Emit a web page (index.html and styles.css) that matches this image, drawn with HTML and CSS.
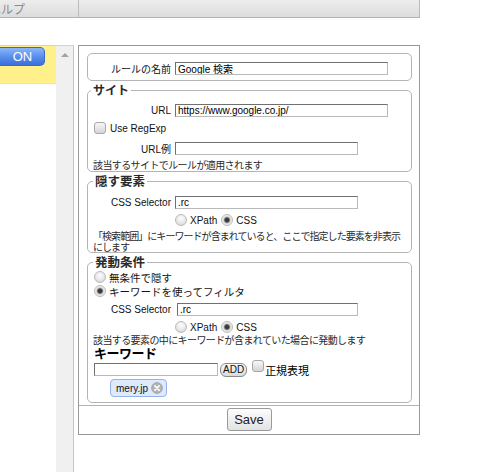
FILE: index.html
```html
<!DOCTYPE html>
<html lang="ja">
<head>
<meta charset="utf-8">
<title>Rules</title>
<link rel="stylesheet" href="styles.css">
</head>
<body>
<div class="app">
  <div class="tabs">
    <div class="tab-help">ヘルプ</div>
    <div class="tab-rest"></div>
  </div>
  <div class="main">
    <div class="side">
      <div class="list">
        <div class="item"><button class="toggle">ON</button></div>
      </div>
      <div class="scrollbar"><span class="arrow"></span></div>
    </div>
    <div class="editor">
      <div class="sections">
        <fieldset class="fs fs-name">
          <div class="row r16"><label class="lbl">ルールの名前</label><input class="txt wide" value="Google 検索"></div>
        </fieldset>
        <fieldset class="fs fs-site">
          <legend class="lg lg-s">サイト</legend>
          <div class="row r16"><label class="lbl">URL</label><input class="txt wide" value="https://www.google.co.jp/"></div>
          <div class="row r20 opt"><input type="checkbox" class="check"><span class="opt-t">Use RegExp</span></div>
          <div class="row r20"><label class="lbl">URL例</label><input class="txt narrow" value=""></div>
          <p class="note n13">該当するサイトでルールが適用されます</p>
        </fieldset>
        <fieldset class="fs fs-hide">
          <legend class="lg">隠す要素</legend>
          <div class="row r16"><label class="lbl">CSS Selector</label><input class="txt narrow" value=".rc"></div>
          <div class="row r20 radios">
            <label class="rl"><input type="radio" class="radio" name="t1"><span>XPath</span></label>
            <label class="rl"><input type="radio" class="radio" name="t1" checked><span>CSS</span></label>
          </div>
          <p class="note n11 tight">「検索範囲」にキーワードが含まれていると、ここで指定した要素を非表示<br>にします</p>
        </fieldset>
        <fieldset class="fs fs-cond">
          <legend class="lg">発動条件</legend>
          <div class="row r14 first"><label class="rl jp"><input type="radio" class="radio" name="c"><span>無条件で隠す</span></label></div>
          <div class="row r14"><label class="rl jp"><input type="radio" class="radio" name="c" checked><span>キーワードを使ってフィルタ</span></label></div>
          <div class="row r22"><label class="lbl">CSS Selector</label><input class="txt narrow shift" value=".rc"></div>
          <div class="row r14 radios">
            <label class="rl"><input type="radio" class="radio" name="t2"><span>XPath</span></label>
            <label class="rl"><input type="radio" class="radio" name="t2" checked><span>CSS</span></label>
          </div>
          <p class="note n12">該当する要素の中にキーワードが含まれていた場合に発動します</p>
          <h3 class="kw-title">キーワード</h3>
          <div class="row kw-row">
            <input class="txt kw" value="">
            <button class="add">ADD</button>
            <input type="checkbox" class="check kw-check">
            <span class="regex">正規表現</span>
          </div>
          <div class="tags">
            <span class="tag">mery.jp<svg class="tag-x" width="12" height="12" viewBox="0 0 12 12"><circle cx="6" cy="6" r="5.4" fill="#b4b4b4" stroke="#9c9c9c" stroke-width="0.8"/><path d="M3.9 3.9l4.2 4.2M8.1 3.9l-4.2 4.2" stroke="#fff" stroke-width="1.6" stroke-linecap="round"/></svg></span>
          </div>
        </fieldset>
      </div>
      <div class="footer"><button class="save">Save</button></div>
    </div>
  </div>
</div>
</body>
</html>
```

FILE: styles.css
```css
* { box-sizing: border-box; }
html, body { margin: 0; padding: 0; background: #fff; }
body {
  width: 490px;
  height: 472px;
  overflow: hidden;
  font-family: "Liberation Sans", "Noto Sans CJK JP", sans-serif;
  font-size: 10px;
  color: #1a1a1a;
}
.app { width: 420px; }

/* top tab bar */
.tabs {
  display: flex;
  height: 18px;
  background: linear-gradient(#ededed, #dcdcdc);
  border-bottom: 1px solid #b2b2b2;
  border-right: 1px solid #bcbcbc;
}
.tab-help {
  width: 79px;
  border-right: 1px solid #bcbcbc;
  overflow: hidden;
  white-space: nowrap;
  font-family: "Noto Sans CJK JP", sans-serif;
  font-size: 12px;
  line-height: 17px;
  color: #8c8c8c;
  text-indent: -11px;
}
.tab-rest { flex: 1; }

/* main area */
.main { display: flex; margin-top: 27px; }

.side {
  width: 74px;
  height: 440px;
  margin-right: 4px;
  display: flex;
  border-top: 1px solid #d2d2d2;
  border-right: 1px solid #c6c6c6;
}
.list { flex: 1; }
.item {
  height: 37px;
  padding-top: 1px;
  background: #fff08a;
  box-shadow: 0 1px 1px rgba(0, 0, 0, 0.12);
}
.toggle {
  display: block;
  width: 45px;
  height: 19px;
  margin: 0;
  padding: 0 0 0 1px;
  border: 1px solid #3a69c8;
  border-left: none;
  border-radius: 0 5px 5px 0;
  background: linear-gradient(#8bb7f8, #5b8fec 50%, #3b6fdb);
  color: #fff;
  font-family: "Liberation Sans", sans-serif;
  font-size: 13px;
  line-height: 17px;
}
.scrollbar {
  width: 17px;
  background: #f0f0f0;
  display: flex;
  justify-content: center;
  align-items: flex-start;
}
.arrow {
  margin-top: 7px;
  width: 0;
  height: 0;
  border-left: 4px solid transparent;
  border-right: 4px solid transparent;
  border-bottom: 4px solid #a3a3a3;
}

/* editor panel */
.editor {
  width: 342px;
  height: 390px;
  border: 1px solid #999;
  display: flex;
  flex-direction: column;
}
.sections { padding: 7px 7px 2px 8px; }

.fs {
  margin: 0 0 2px;
  padding: 0 5px;
  min-width: 0;
  border: 1px solid #b4b4b4;
  border-radius: 5px;
}
.fs-name { padding-top: 6px; padding-bottom: 4px; }
.fs-site { padding-top: 5px; }
.fs-hide { padding-top: 6px; }
.fs-cond { padding-top: 1px; padding-bottom: 5px; margin-bottom: 0; margin-top: 1px; }

.lg {
  margin-left: -2px;
  padding: 0 2px;
  font-family: "Noto Sans CJK JP", sans-serif;
  font-weight: bold;
  font-size: 12.5px;
  line-height: 14px;
  color: #2a2a2a;
}
.lg-s { font-size: 12px; }
.fs-hide .lg, .fs-cond .lg { margin-left: 0; }

.row { display: flex; align-items: center; }
.r14 { height: 14px; }
.r16 { height: 16px; }
.r20 { height: 20px; }
.r22 { height: 22px; }

.lbl {
  width: 78px;
  margin-right: 4px;
  text-align: right;
  font-size: 10px;
  color: #111;
  white-space: nowrap;
}
.txt {
  height: 13px;
  margin: 0;
  padding: 0 2px;
  border: 1px solid;
  border-color: #707070 #b9b9b9 #b9b9b9 #707070;
  font-family: "Liberation Sans", "Noto Sans CJK JP", sans-serif;
  font-size: 10px;
  line-height: 11px;
  color: #000;
  background: #fff;
}
.wide { width: 213px; }
.narrow { width: 183px; }
.shift { margin-left: 2px; width: 181px; }

.opt { padding-left: 1px; }
.opt-t { margin-left: 4px; font-size: 10px; color: #111; }

.radio, .check {
  -webkit-appearance: none;
  appearance: none;
  margin: 0;
  width: 12px;
  height: 12px;
  flex: none;
}
.radio {
  border-radius: 50%;
  border: 1px solid #bababa;
  background: radial-gradient(circle at 50% 35%, #fefefe, #e2e2e2 65%, #cdcdcd);
}
.radio:checked {
  background: radial-gradient(circle, #3a3a3a 0 1.6px, #7d7d7d 2.6px, #dadada 3.6px, #f3f3f3 5px);
}
.check {
  border-radius: 3px;
  border: 1px solid #a8a8a8;
  background: linear-gradient(#f7f7f7, #d5d5d5);
}

.radios { padding-left: 82px; gap: 4px; }
.rl { display: flex; align-items: center; gap: 3px; font-size: 10px; color: #111; }
.rl.jp { padding-left: 1px; font-family: "Noto Sans CJK JP", sans-serif; font-size: 10.5px; }

.note {
  margin: 0;
  font-family: "Noto Sans CJK JP", sans-serif;
  font-size: 10px;
  letter-spacing: -0.6px;
  color: #2a2a2a;
  white-space: nowrap;
}
.note.tight { letter-spacing: -0.95px; }
.n13 { line-height: 13px; }
.n12 { line-height: 12px; }
.n11 { line-height: 11px; }

.kw-title {
  margin: 0;
  padding-left: 1px;
  font-family: "Noto Sans CJK JP", sans-serif;
  font-size: 13px;
  line-height: 14px;
  font-weight: bold;
  letter-spacing: -0.5px;
  color: #000;
}
.kw-row { height: 17px; margin-top: 1px; padding-left: 1px; }
.kw { width: 124px; }
.add {
  height: 14px;
  margin: 0 0 0 2px;
  padding: 0 2px;
  border: 1px solid #8a8a8a;
  border-radius: 6px;
  background: linear-gradient(#fbfbfb, #d9d9d9);
  font-family: "Liberation Sans", sans-serif;
  font-size: 10px;
  line-height: 12px;
  color: #111;
}
.kw-check { margin-left: 5px; align-self: flex-start; margin-top: -1px; }
.regex {
  margin-left: 1px;
  font-family: "Noto Sans CJK JP", sans-serif;
  font-size: 11px;
  color: #000;
}

.tags { margin-top: 1px; padding-left: 17px; display: flex; }
.tag {
  display: flex;
  align-items: center;
  gap: 3px;
  height: 18px;
  padding: 0 3px 0 5px;
  border: 1px solid #93b2ea;
  border-radius: 4px;
  background: #dde9fd;
  font-family: "Liberation Sans", sans-serif;
  font-size: 10px;
  color: #111;
}
.tag-x { display: block; }

.footer {
  flex: 1;
  border-top: 1px solid #b4b4b4;
  text-align: center;
  padding-top: 2px;
}
.save {
  width: 45px;
  height: 23px;
  margin: 0;
  padding: 0;
  border: 1px solid #9a9a9a;
  border-radius: 3px;
  background: linear-gradient(#fdfdfd, #e2e2e2);
  font-family: "Liberation Sans", sans-serif;
  font-size: 13px;
  color: #222;
}
```
